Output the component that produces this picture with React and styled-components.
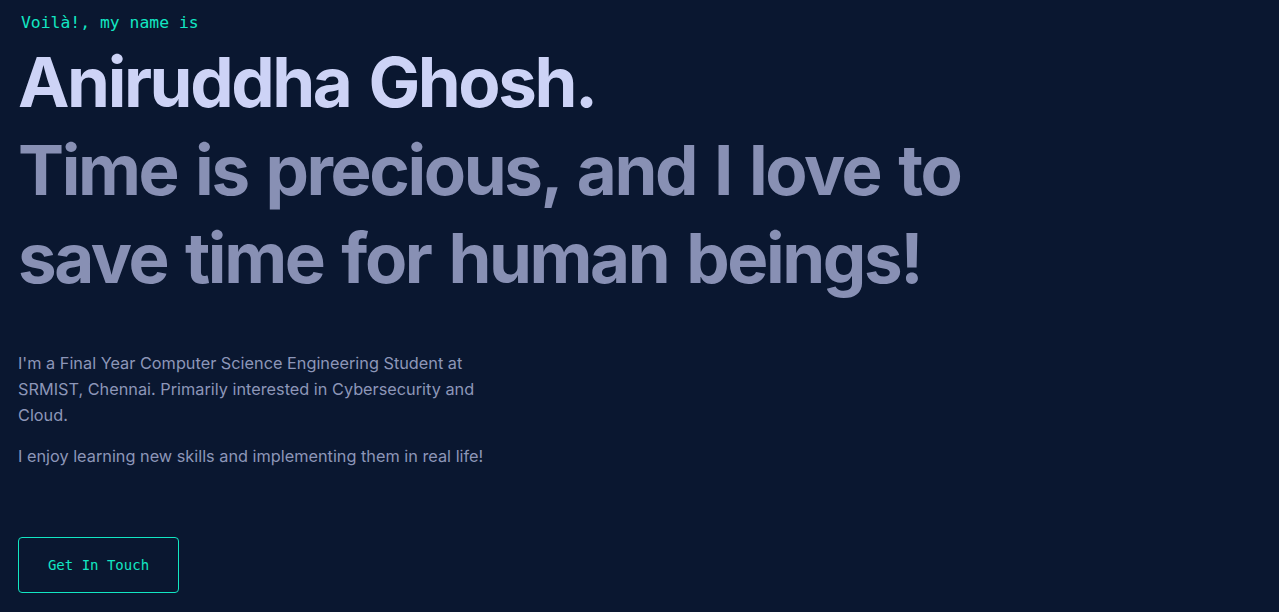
import React from "react";
import styled, { createGlobalStyle } from "styled-components";

const Global = createGlobalStyle`
  html, body { margin: 0; padding: 0; background: #0a1730; }
  body { font-family: "Inter", "Noto Sans", sans-serif; -webkit-font-smoothing: antialiased; }
  * { box-sizing: border-box; }
`;

const Hero = styled.section`
  min-height: 612px;
  background: #0a1730;
  padding: 12px 0 0 18px;
  display: flex;
  flex-direction: column;
  align-items: flex-start;
`;

const Intro = styled.h1`
  margin: 0 0 0 3px;
  font-family: "DejaVu Sans Mono", "Liberation Mono", monospace;
  font-weight: 400;
  font-size: 16.4px;
  line-height: 22px;
  color: #12e6c2;
`;

const BigHeading = styled.h2`
  margin: ${(p) => p.$mt || "0"} 0 0 0;
  font-family: "Inter", "Noto Sans", sans-serif;
  font-weight: 700;
  font-size: 69px;
  letter-spacing: -0.035em;
  word-spacing: 4px;
  line-height: 88px;
  color: ${(p) => p.$color};
  max-width: 1000px;
`;

const Para = styled.p`
  margin: ${(p) => p.$mt} 0 0 0;
  max-width: 480px;
  font-family: "Inter", "Noto Sans", sans-serif;
  font-size: 16.3px;
  line-height: 26px;
  color: #8d96b8;
`;

const Button = styled.a`
  margin-top: 68px;
  width: 161px;
  height: 56px;
  display: flex;
  align-items: center;
  justify-content: center;
  border: 1px solid #12e6c2;
  border-radius: 4px;
  font-family: "DejaVu Sans Mono", "Liberation Mono", monospace;
  font-size: 14px;
  color: #12e6c2;
  text-decoration: none;
`;

export default function App() {
  return (
    <>
      <Global />
      <Hero>
        <Intro>Voilà!, my name is</Intro>
        <BigHeading $color="#cdd3f6" $mt="4px">Aniruddha Ghosh.</BigHeading>
        <BigHeading $color="#8890b4">
          Time is precious, and I love to save time for human beings!
        </BigHeading>
        <Para $mt="48px">
          I'm a Final Year Computer Science Engineering Student at SRMIST,
          Chennai. Primarily interested in Cybersecurity and Cloud.
        </Para>
        <Para $mt="15px">
          I enjoy learning new skills and implementing them in real life!
        </Para>
        <Button href="#">Get In Touch</Button>
      </Hero>
    </>
  );
}
